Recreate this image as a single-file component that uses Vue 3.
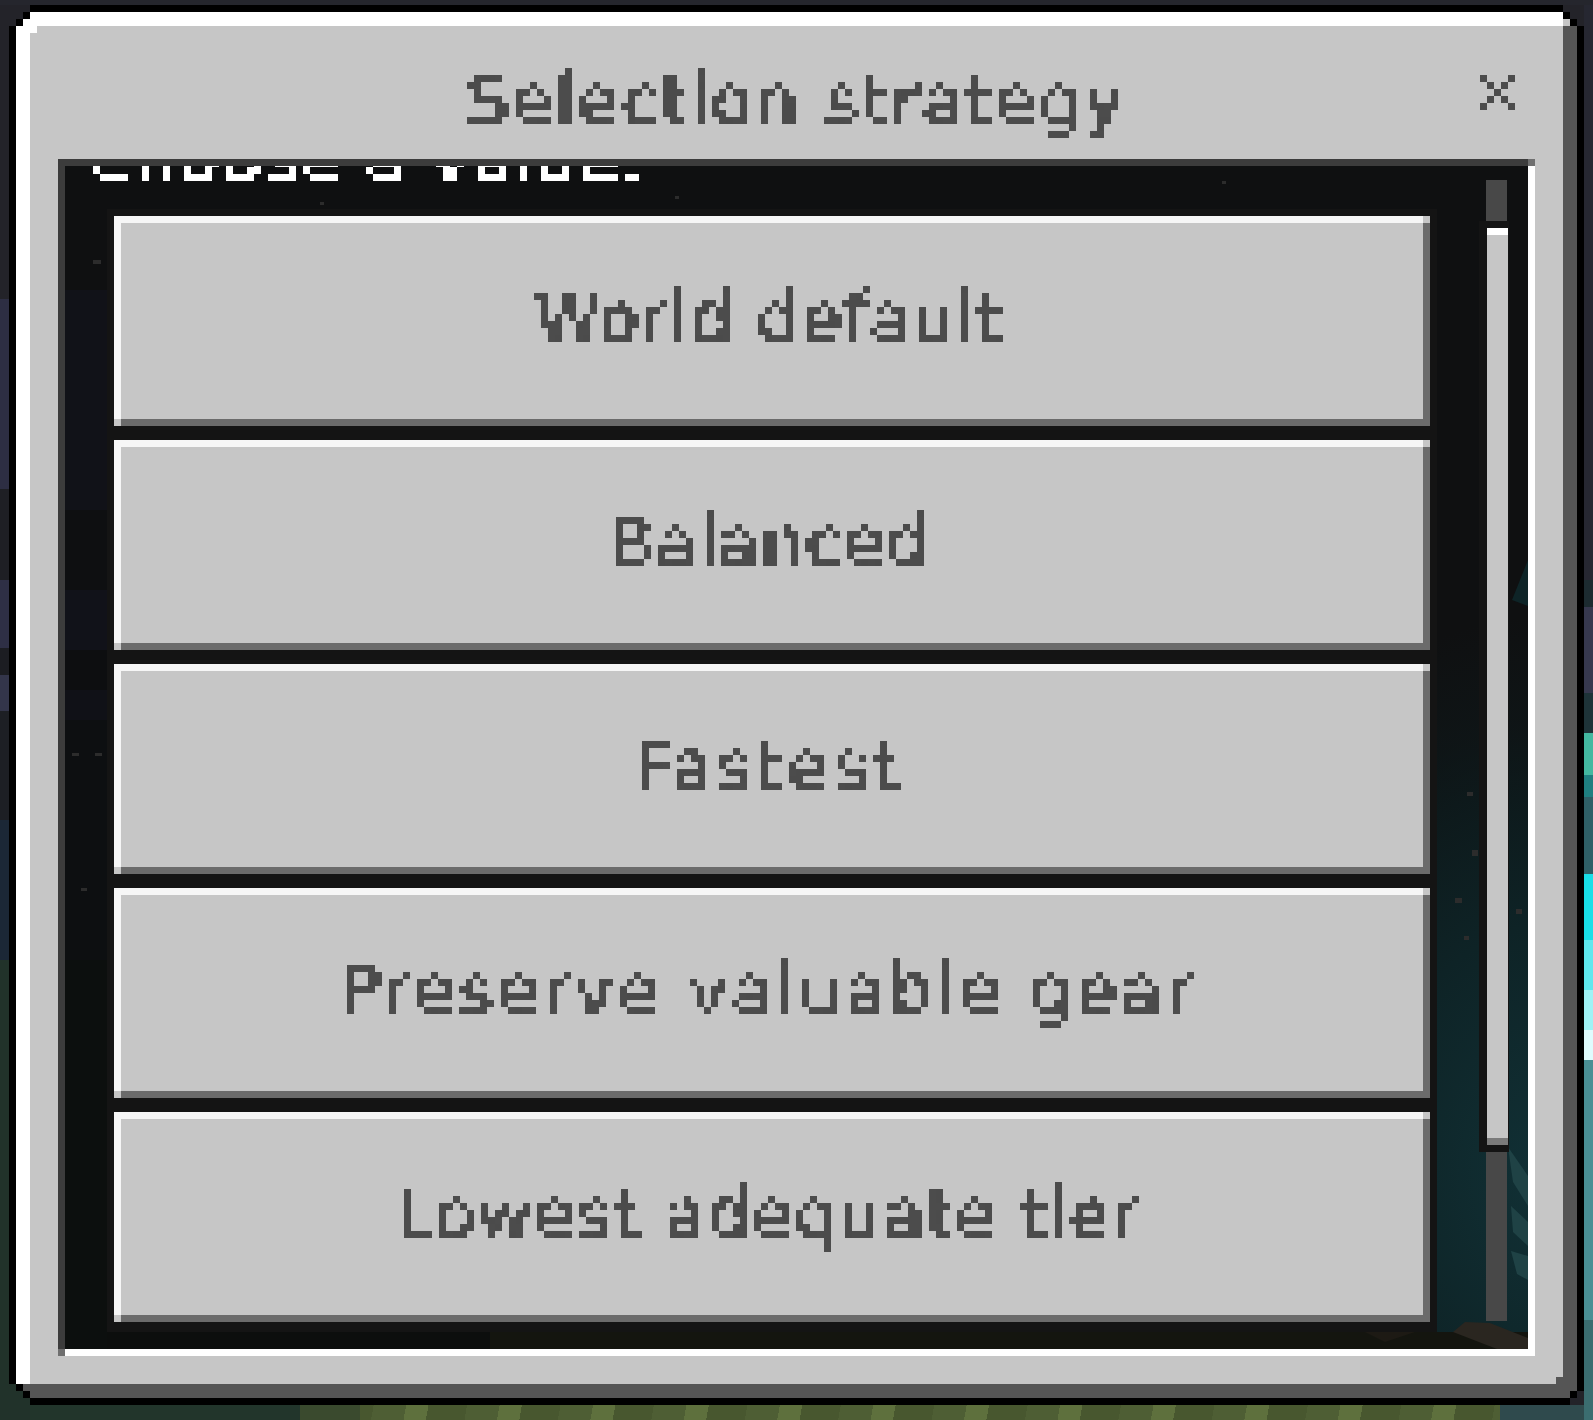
<script setup>
const options = [
  { label: 'World default', spacing: 1.55 },
  { label: 'Balanced', spacing: 1.4 },
  { label: 'Fastest', spacing: 4.5 },
  { label: 'Preserve valuable gear', spacing: 3.9 },
  { label: 'Lowest adequate tier', spacing: 1.8 },
]
</script>

<template>
  <div class="stage">
    <svg class="defs" width="0" height="0" aria-hidden="true">
      <filter id="px" x="-5%" y="-5%" width="110%" height="110%" color-interpolation-filters="sRGB">
        <feFlood x="3" y="3" width="1" height="1" flood-color="#000" />
        <feComposite width="7" height="7" />
        <feTile result="grid" />
        <feComposite in="SourceGraphic" in2="grid" operator="in" />
        <feComponentTransfer>
          <feFuncA type="discrete" tableValues="0 1" />
        </feComponentTransfer>
        <feMorphology operator="dilate" radius="3" />
      </filter>
    </svg>
    <div class="panel">
      <div class="bevel">
        <header class="head">
          <h1 class="title"><span class="px">Selection strategy</span></h1>
          <svg class="close" width="35" height="35" viewBox="0 0 5 5" shape-rendering="crispEdges" aria-label="Close">
            <path fill="#4c4c4c" d="M0 0h1v1H0zM4 0h1v1H4zM1 1h1v1H1zM3 1h1v1H3zM2 2h1v1H2zM1 3h1v1H1zM3 3h1v1H3zM0 4h1v1H0zM4 4h1v1H4z" />
          </svg>
        </header>
        <div class="well">
          <div class="viewport">
            <svg class="scene" width="1463" height="1183" viewBox="0 0 1463 1183" aria-hidden="true">
              <polygon fill="#0e2427" points="1447,434 1463,394 1463,440" />
              <polygon fill="#1f4245" points="1443,981 1463,1010 1463,1040 1448,1016" />
              <polygon fill="#1f4245" points="1446,1040 1463,1056 1463,1080 1448,1066" />
              <polygon fill="#1f4245" points="1446,1085 1463,1090 1463,1114 1452,1108" />
              <polygon fill="#2a2620" points="1400,1156 1425,1157 1463,1172 1463,1183 1432,1183 1388,1166" />
              <polygon fill="#1d1a14" points="1300,1166 1350,1166 1320,1176" />
              <g fill="#2c2c2c">
                <rect x="28" y="94" width="8" height="4" />
                <rect x="7" y="587" width="7" height="3" />
                <rect x="30" y="587" width="7" height="3" />
                <rect x="16" y="722" width="6" height="3" />
                <rect x="255" y="36" width="4" height="3" />
                <rect x="610" y="30" width="4" height="3" />
                <rect x="1157" y="15" width="4" height="3" />
                <rect x="1402" y="626" width="6" height="4" />
                <rect x="1407" y="684" width="6" height="6" />
                <rect x="1390" y="732" width="7" height="5" />
                <rect x="1399" y="770" width="5" height="4" />
                <rect x="1451" y="743" width="6" height="5" />
              </g>
            </svg>
            <div class="content">
              <p class="prompt"><span class="px">Choose a value:</span></p>
              <div class="list">
                <button v-for="o in options" :key="o.label" class="opt" type="button">
                  <span class="px" :style="{ letterSpacing: o.spacing + 'px' }">{{ o.label }}</span>
                </button>
              </div>
            </div>
            <div class="scroll">
              <div class="thumb"></div>
            </div>
          </div>
        </div>
      </div>
    </div>
  </div>
</template>

<style scoped>
.stage {
  width: 1593px;
  height: 1420px;
  box-sizing: border-box;
  padding: 5px 9px 15px;
  background:
    linear-gradient(#25262d, #25262d) 0 0 / 100% 5px no-repeat,
    linear-gradient(to bottom,
      #232329 0 299px, #2d2e43 299px 489px, #1e1f24 489px 580px, #2e2f45 580px 648px,
      #1c1d22 648px 675px, #33354a 675px 711px, #1d1f24 711px 820px, #1b2736 820px 960px,
      #21322a 960px 100%) 0 0 / 30px 100% no-repeat,
    linear-gradient(to bottom,
      #262731 0 580px, #1c2b30 580px 607px, #36384e 607px 693px, #1e3338 693px 733px,
      #43b8a0 733px 775px, #1f7f80 775px 797px, #2f5f66 797px 874px, #19dfe8 874px 940px, #5fe8ee 940px 990px, #9ff3f6 990px 1030px,
      #dffcfd 1030px 1060px, #4a8f95 1060px 1320px, #3b6d70 1320px 100%) 100% 0 / 9px 100% no-repeat,
    linear-gradient(to right, #22352b 0 300px, #3a4a2e 300px 360px, transparent 360px 1500px, #2f4a4d 1500px 100%) 0 100% / 100% 15px no-repeat,
    repeating-linear-gradient(100deg, #4e5e34 0 32px, #5e703d 32px 54px, #48572f 54px 92px) 0 100% / 100% 15px no-repeat,
    #232329;
}
.defs {
  display: block;
  height: 0;
  width: 0;
}
.panel {
  box-sizing: border-box;
  width: 1575px;
  height: 1400px;
  padding: 7px;
  background: #000;
  clip-path: polygon(
    21px 0, 1554px 0, 1554px 7px, 1561px 7px, 1561px 14px, 1568px 14px, 1568px 21px, 1575px 21px,
    1575px 1386px, 1568px 1386px, 1568px 1393px, 1561px 1393px, 1561px 1400px,
    21px 1400px, 21px 1393px, 14px 1393px, 14px 1386px, 7px 1386px, 7px 1379px, 0 1379px,
    0 21px, 7px 21px, 7px 14px, 14px 14px, 14px 7px, 21px 7px);
}
.bevel {
  position: relative;
  box-sizing: border-box;
  width: 1561px;
  height: 1386px;
  padding: 14px;
  background:
    linear-gradient(#fff, #fff) 14px 14px / 7px 7px no-repeat,
    linear-gradient(#555, #555) 1540px 1365px / 7px 7px no-repeat,
    #c6c6c6;
  box-shadow: inset -14px -14px 0 #555, inset 14px 14px 0 #fff;
  clip-path: polygon(
    14px 0, 1547px 0, 1547px 7px, 1554px 7px, 1554px 14px, 1561px 14px,
    1561px 1379px, 1554px 1379px, 1554px 1386px,
    14px 1386px, 14px 1379px, 7px 1379px, 7px 1372px, 0 1372px,
    0 14px, 7px 14px, 7px 7px, 14px 7px);
}
.bevel::before {
  content: '';
  position: absolute;
  left: 1547px;
  top: 7px;
  width: 7px;
  height: 7px;
  background: #c6c6c6;
}
.head {
  position: relative;
  box-sizing: border-box;
  height: 133px;
  padding: 35px 0 0;
  display: flex;
  align-items: flex-start;
  justify-content: center;
}
.px {
  font-family: "DejaVu Sans", sans-serif;
  font-size: 67px;
  line-height: 80px;
  white-space: pre;
  display: inline-block;
  -webkit-text-stroke: 1.6px currentColor;
  filter: url(#px);
}
.title {
  margin: 0;
  font-weight: 400;
  font-size: inherit;
  color: #4c4c4c;
  letter-spacing: 2.8px;
}
.close {
  position: absolute;
  left: 1450px;
  top: 49px;
}
.well {
  position: relative;
  box-sizing: border-box;
  margin: 0 28px 28px;
  width: 1477px;
  height: 1197px;
  padding: 7px;
  box-shadow: inset -7px -7px 0 #fff, inset 7px 7px 0 #3c3c3c;
}
.well::before,
.well::after {
  content: '';
  position: absolute;
  width: 7px;
  height: 7px;
  background: #6f6f6f;
}
.well::before {
  right: 0;
  top: 0;
}
.well::after {
  left: 0;
  bottom: 0;
}
.viewport {
  position: relative;
  width: 1463px;
  height: 1183px;
  overflow: hidden;
  display: flex;
  background:
    linear-gradient(to bottom,
      #0f1011 0 124px, #111218 124px 344px, #0e0f11 344px 424px, #111219 424px 484px,
      #0d0e10 484px 524px, #101117 524px 554px, #0d0f11 554px 794px, #0c0f0e 794px 100%) 0 0 / 42px 100% no-repeat,
    linear-gradient(to right, #0c0e0d 0 425px, #14150f 425px 100%) 0 100% / 100% 17px no-repeat,
    radial-gradient(420px 560px at 1490px 1010px, #113136 0, #0e2326 45%, rgba(14, 24, 26, 0.6) 80%, transparent 100%),
    linear-gradient(to bottom, #0f1011 0 560px, #0c1112 640px, #0f1415 100%);
}
.scene {
  position: absolute;
  left: 0;
  top: 0;
}
.content {
  position: relative;
  width: 1372px;
  flex: none;
}
.prompt {
  margin: -48px 0 11px 21px;
  height: 80px;
  color: #fff;
  letter-spacing: 1.5px;
}
.list {
  margin-left: 42px;
  width: 1330px;
  box-sizing: border-box;
  padding: 7px 7px 10px;
  background: #141414;
  display: flex;
  flex-direction: column;
  gap: 14px;
}
.opt {
  position: relative;
  display: flex;
  align-items: center;
  justify-content: center;
  box-sizing: border-box;
  height: 210px;
  padding: 0 6px 4px 0;
  border: 0;
  background: #c6c6c6;
  color: #4c4c4c;
  box-shadow: inset -7px -7px 0 #6b6b6b, inset 7px 7px 0 #f6f6f6;
}
.opt::before,
.opt::after {
  content: '';
  position: absolute;
  width: 7px;
  height: 7px;
  background: #c6c6c6;
}
.opt::before {
  right: 0;
  top: 0;
}
.opt::after {
  left: 0;
  bottom: 0;
}
.scroll {
  position: absolute;
  left: 1421px;
  top: 14px;
  width: 21px;
  height: 1141px;
  background: #484848;
}
.thumb {
  position: absolute;
  left: 1px;
  top: 48px;
  width: 21px;
  height: 917px;
  box-sizing: border-box;
  background: #c6c6c6;
  border-top: 7px solid #fff;
  border-bottom: 7px solid #7a7a7a;
  box-shadow: -8px -7px 0 0 #141414, 1px -7px 0 0 #141414, -8px 7px 0 0 #141414, 1px 7px 0 0 #141414;
}
</style>

<style>
html, body {
  margin: 0;
  background: #232329;
}
</style>
